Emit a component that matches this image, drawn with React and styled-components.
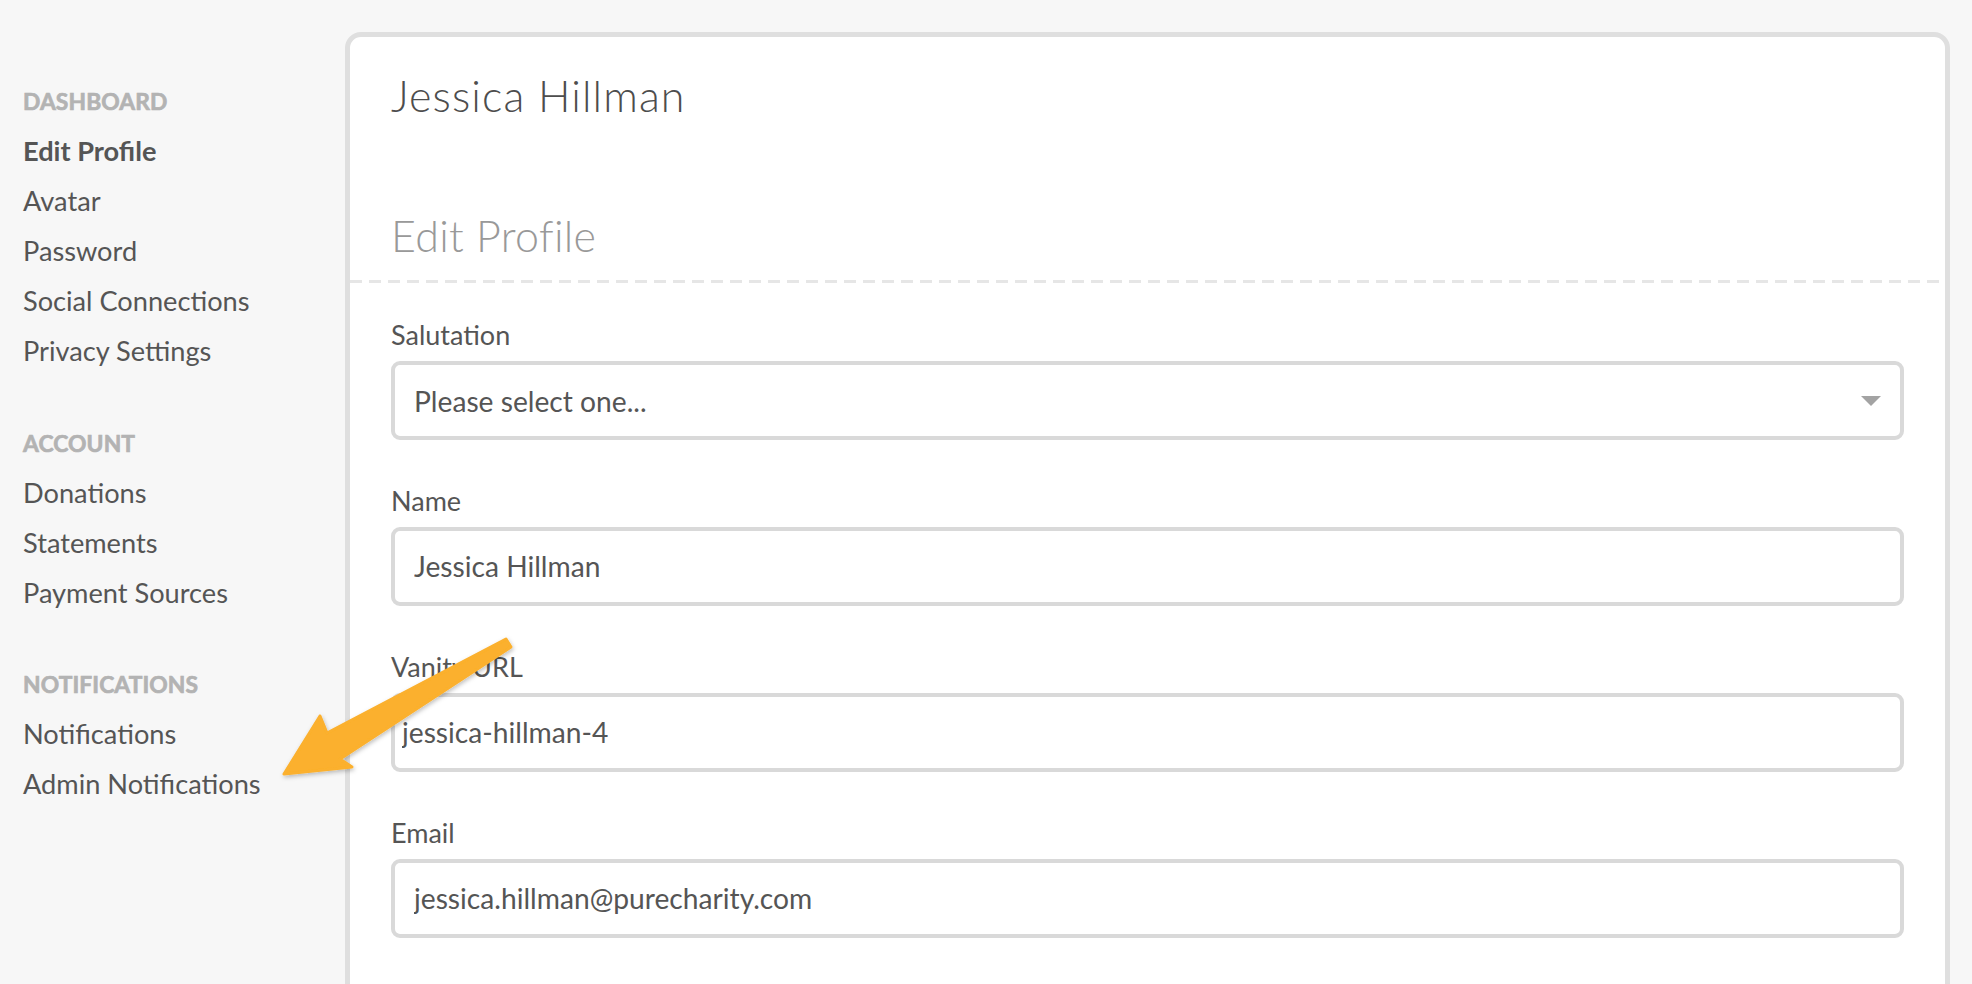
import React from "react";
import styled, { createGlobalStyle } from "styled-components";

const GlobalStyle = createGlobalStyle`
  html, body {
    margin: 0;
    padding: 0;
    height: 100%;
    overflow: hidden;
    background: #f7f7f7;
  }
  body {
    font-family: Lato, "Liberation Sans", sans-serif;
    color: #555;
  }
  * { box-sizing: border-box; }
`;

const navGroups = [
  {
    title: "Dashboard",
    items: ["Edit Profile", "Avatar", "Password", "Social Connections", "Privacy Settings"],
  },
  { title: "Account", items: ["Donations", "Statements", "Payment Sources"] },
  { title: "Notifications", items: ["Notifications", "Admin Notifications"] },
];

const fields = [
  { label: "Name", value: "Jessica Hillman", pad: 19 },
  { label: "Vanity URL", value: "jessica-hillman-4", pad: 7 },
  { label: "Email", value: "jessica.hillman@purecharity.com", pad: 19 },
];

const App = () => {
  return (
    <Page>
      <GlobalStyle />
      <Sidebar>
        {navGroups.map((group) => (
          <NavGroup key={group.title}>
            <GroupTitle>{group.title}</GroupTitle>
            {group.items.map((item) => (
              <NavItem key={item} $active={item === "Edit Profile"}>
                {item}
              </NavItem>
            ))}
          </NavGroup>
        ))}
      </Sidebar>

      <Card>
        <CardHeader>
          <UserName>Jessica Hillman</UserName>
        </CardHeader>
        <SectionHead>
          <SectionTitle>Edit Profile</SectionTitle>
        </SectionHead>
        <Form>
          <Field>
            <Label>Salutation</Label>
            <Select>
              <span>Please select one...</span>
              <Caret />
            </Select>
          </Field>
          {fields.map((f) => (
            <Field key={f.label}>
              <Label>{f.label}</Label>
              <Input defaultValue={f.value} readOnly $pad={f.pad} />
            </Field>
          ))}
        </Form>
      </Card>

      {/* annotation arrow laid over the page */}
      <Annotation viewBox="0 0 1972 984" width="1972" height="984">
        <defs>
          <filter id="arrowShadow" x="-20%" y="-20%" width="140%" height="140%">
            <feDropShadow dx="1" dy="2" stdDeviation="2" floodColor="#000" floodOpacity="0.25" />
          </filter>
        </defs>
        <polygon
          points="506,639 327,733 320,716 284,774 352,767 340,759 511,647"
          fill="#fbb02d"
          stroke="#fbb02d"
          strokeWidth="3"
          strokeLinejoin="round"
          filter="url(#arrowShadow)"
        />
      </Annotation>
    </Page>
  );
};

export default App;

const Page = styled.div`
  position: relative;
  display: flex;
  align-items: flex-start;
  width: 100%;
  height: 984px;
  overflow: hidden;
`;

const Sidebar = styled.nav`
  width: 345px;
  flex-shrink: 0;
  padding: 76px 0 0 23px;
`;

const NavGroup = styled.div`
  margin-bottom: 41.5px;
`;

const GroupTitle = styled.div`
  font-size: 22.8px;
  font-weight: 700;
  line-height: 50px;
  text-transform: uppercase;
  letter-spacing: 0.1px;
  color: #b3b3b3;
  -webkit-text-stroke: 0.7px #b3b3b3;
`;

const NavItem = styled.div`
  font-size: 27.2px;
  line-height: 50px;
  font-weight: ${({ $active }) => ($active ? 700 : 400)};
  color: #555;
  white-space: nowrap;
`;

const Card = styled.section`
  flex: 1;
  margin: 32px 22px 0 0;
  min-height: 1100px;
  background: #fff;
  border: 5px solid #dfdfdf;
  border-radius: 16px;
`;

const CardHeader = styled.div`
  padding: 32.5px 41px 0;
`;

const UserName = styled.h1`
  margin: 0;
  font-size: 43px;
  font-weight: 300;
  line-height: 1.2;
  letter-spacing: 1.1px;
  color: #4d4d4d;
`;

const SectionHead = styled.div`
  margin-top: 88.5px;
  padding: 0 41px 22px;
  background: repeating-linear-gradient(
      to right,
      #e6e6e6 0,
      #e6e6e6 12px,
      transparent 12px,
      transparent 19px
    )
    left bottom / 100% 3px no-repeat;
`;

const SectionTitle = styled.h2`
  margin: 0;
  font-size: 43px;
  font-weight: 300;
  line-height: 1.2;
  letter-spacing: 0.3px;
  color: #999;
`;

const Form = styled.div`
  padding: 36px 41px 0;
`;

const Field = styled.div`
  margin-bottom: 45px;
`;

const Label = styled.label`
  display: block;
  margin-bottom: 9.5px;
  font-size: 27px;
  line-height: 1.2;
  color: #555;
`;

const boxStyles = `
  width: 100%;
  height: 79px;
  border: 4px solid #d9d9d9;
  border-radius: 9px;
  background: #fff;
  font-family: Lato, "Liberation Sans", sans-serif;
  font-size: 28.2px;
  color: #555;
`;

const Input = styled.input`
  ${boxStyles}
  display: block;
  padding: 0 0 0 ${({ $pad }) => $pad}px;
  outline: none;
`;

const Select = styled.div`
  ${boxStyles}
  display: flex;
  align-items: center;
  justify-content: space-between;
  padding: 0 19px 0 19px;
`;

const Caret = styled.span`
  width: 0;
  height: 0;
  border-left: 10px solid transparent;
  border-right: 10px solid transparent;
  border-top: 10px solid #a3a3a3;
`;

const Annotation = styled.svg`
  position: absolute;
  top: 0;
  left: 0;
  pointer-events: none;
`;
